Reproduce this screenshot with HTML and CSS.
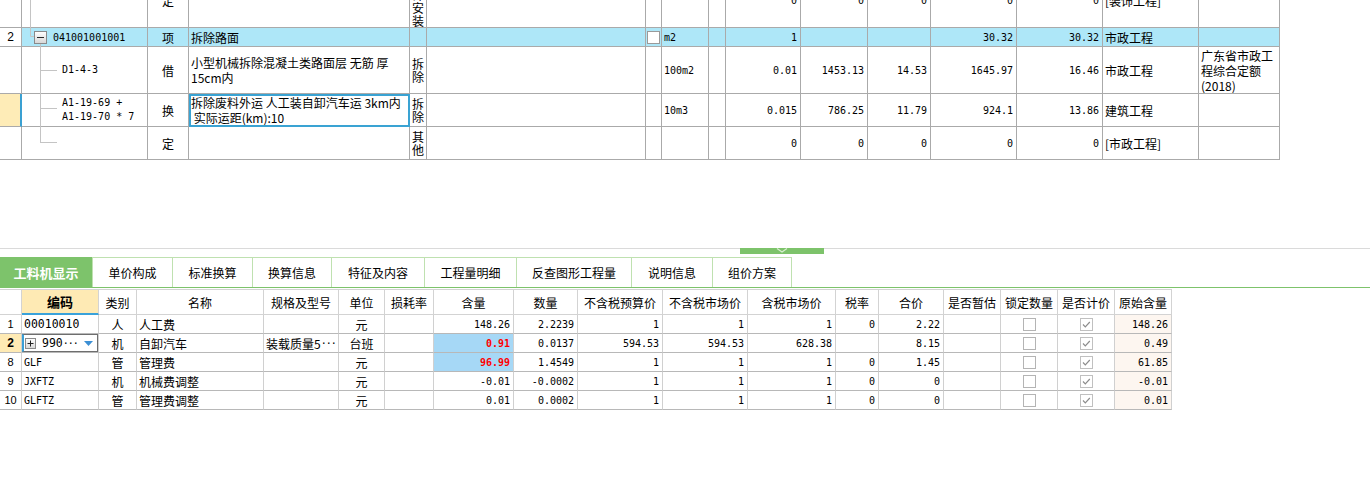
FILE: index.html
```html
<!DOCTYPE html>
<html lang="zh-CN">
<head>
<meta charset="utf-8">
<title>工料机显示</title>
<link rel="stylesheet" href="styles.css">
</head>
<body>
<div class="upper">
  <div class="tgrid">
    <div class="c"></div>
    <div class="c"></div>
    <div class="c ctr">定</div>
    <div class="c"></div>
    <div class="c vert">装饰安装</div>
    <div class="c"></div>
    <div class="c"></div>
    <div class="c"></div>
    <div class="c"></div>
    <div class="c n">0</div>
    <div class="c n">0</div>
    <div class="c n">0</div>
    <div class="c n">0</div>
    <div class="c n">0</div>
    <div class="c txt">[装饰工程]</div>
    <div class="c"></div>

    <div class="c rn">2</div>
    <div class="c hl tree"><svg class="minus" width="13" height="13" viewBox="0 0 13 13"><defs><linearGradient id="gm" x1="0" y1="0" x2="0" y2="1"><stop offset="0" stop-color="#ffffff"/><stop offset="1" stop-color="#d6d6d6"/></linearGradient></defs><rect x="0.5" y="0.5" width="12" height="12" fill="url(#gm)" stroke="#8a8a8a"/><rect x="3" y="6" width="7" height="1" fill="#2a2a2a"/></svg><span class="mono">041001001001</span></div>
    <div class="c hl ctr">项</div>
    <div class="c hl txt">拆除路面</div>
    <div class="c hl"></div>
    <div class="c hl"></div>
    <div class="c hl ctr"><svg width="13" height="13" viewBox="0 0 13 13"><rect x="0.5" y="0.5" width="12" height="12" fill="#fff" stroke="#9a9a9a"/></svg></div>
    <div class="c hl unit">m2</div>
    <div class="c hl"></div>
    <div class="c hl n">1</div>
    <div class="c hl"></div>
    <div class="c hl"></div>
    <div class="c hl n">30.32</div>
    <div class="c hl n">30.32</div>
    <div class="c hl txt">市政工程</div>
    <div class="c hl"></div>

    <div class="c"></div>
    <div class="c code">D1-4-3</div>
    <div class="c ctr">借</div>
    <div class="c txt"><span class="ml">小型机械拆除混凝土类路面层 无筋 厚<br>15cm内</span></div>
    <div class="c vert">拆除</div>
    <div class="c"></div>
    <div class="c"></div>
    <div class="c unit">100m2</div>
    <div class="c"></div>
    <div class="c n">0.01</div>
    <div class="c n">1453.13</div>
    <div class="c n">14.53</div>
    <div class="c n">1645.97</div>
    <div class="c n">16.46</div>
    <div class="c txt">市政工程</div>
    <div class="c txt"><span class="ml">广东省市政工<br>程综合定额<br>(2018)</span></div>

    <div class="c rn cur"></div>
    <div class="c code"><span>A1-19-69 +<br>A1-19-70 * 7</span></div>
    <div class="c ctr">换</div>
    <div class="c txt sel"><span class="ml">拆除废料外运 人工装自卸汽车运 3km内<br>&nbsp;实际运距(km):10</span></div>
    <div class="c vert">拆除</div>
    <div class="c"></div>
    <div class="c"></div>
    <div class="c unit">10m3</div>
    <div class="c"></div>
    <div class="c n">0.015</div>
    <div class="c n">786.25</div>
    <div class="c n">11.79</div>
    <div class="c n">924.1</div>
    <div class="c n">13.86</div>
    <div class="c txt">建筑工程</div>
    <div class="c"></div>

    <div class="c"></div>
    <div class="c"></div>
    <div class="c ctr">定</div>
    <div class="c"></div>
    <div class="c vert">其他</div>
    <div class="c"></div>
    <div class="c"></div>
    <div class="c"></div>
    <div class="c"></div>
    <div class="c n">0</div>
    <div class="c n">0</div>
    <div class="c n">0</div>
    <div class="c n">0</div>
    <div class="c n">0</div>
    <div class="c txt">[市政工程]</div>
    <div class="c"></div>
  </div>
  <svg class="tree-lines" width="70" height="160" viewBox="0 0 70 160">
    <path d="M30.5 0V36.5H34M40.5 44V142.5M40 70.5H57M40 108.5H57M40 142.5H57" fill="none" stroke="#c4c4c4" stroke-width="1"/>
  </svg>
</div>

<div class="gap"></div>
<div class="splitter"><div class="handle"><svg width="12" height="5" viewBox="0 0 12 5"><path d="M1 0.5L6 4L11 0.5" fill="none" stroke="#d8efcf" stroke-width="1.2"/></svg></div></div>

<div class="tabs">
  <div class="tab on w92">工料机显示</div>
  <div class="tab first w81">单价构成</div>
  <div class="tab w80">标准换算</div>
  <div class="tab w79">换算信息</div>
  <div class="tab w93">特征及内容</div>
  <div class="tab w92">工程量明细</div>
  <div class="tab w115">反查图形工程量</div>
  <div class="tab w81">说明信息</div>
  <div class="tab w79">组价方案</div>
</div>

<div class="bgrid">
  <div class="h"></div>
  <div class="h key">编码</div>
  <div class="h">类别</div>
  <div class="h">名称</div>
  <div class="h">规格及型号</div>
  <div class="h">单位</div>
  <div class="h">损耗率</div>
  <div class="h">含量</div>
  <div class="h">数量</div>
  <div class="h">不含税预算价</div>
  <div class="h">不含税市场价</div>
  <div class="h">含税市场价</div>
  <div class="h">税率</div>
  <div class="h">合价</div>
  <div class="h">是否暂估</div>
  <div class="h">锁定数量</div>
  <div class="h">是否计价</div>
  <div class="h">原始含量</div>

  <div class="d rno">1</div>
  <div class="d lft code7">00010010</div>
  <div class="d ctr">人</div>
  <div class="d lft">人工费</div>
  <div class="d lft"></div>
  <div class="d ctr">元</div>
  <div class="d"></div>
  <div class="d n">148.26</div>
  <div class="d n">2.2239</div>
  <div class="d n">1</div>
  <div class="d n">1</div>
  <div class="d n">1</div>
  <div class="d n">0</div>
  <div class="d n">2.22</div>
  <div class="d"></div>
  <div class="d ctr"><svg width="13" height="13" viewBox="0 0 13 13"><rect x="0.5" y="0.5" width="12" height="12" fill="#fff" stroke="#b4b4b4"/></svg></div>
  <div class="d ctr"><svg width="13" height="13" viewBox="0 0 13 13"><rect x="0.5" y="0.5" width="12" height="12" fill="#fff" stroke="#c0c0c0"/><path d="M3 6.5L5.3 8.8L9.8 4" fill="none" stroke="#8c8c8c" stroke-width="1.2"/></svg></div>
  <div class="d n orig">148.26</div>

  <div class="d rno cur">2</div>
  <div class="d edit-cell"><div class="edit"><svg width="11" height="11" viewBox="0 0 11 11"><defs><linearGradient id="gp" x1="0" y1="0" x2="0" y2="1"><stop offset="0" stop-color="#ffffff"/><stop offset="1" stop-color="#d6d6d6"/></linearGradient></defs><rect x="0.5" y="0.5" width="10" height="10" fill="url(#gp)" stroke="#8a8a8a"/><rect x="2.5" y="5" width="6" height="1" fill="#222"/><rect x="5" y="2.5" width="1" height="6" fill="#222"/></svg><span class="code7 ev">990<span class="dots">···</span></span><svg class="dd" width="9" height="5" viewBox="0 0 9 5"><path d="M0 0H9L4.5 5Z" fill="#3c8fd4"/></svg></div></div>
  <div class="d ctr">机</div>
  <div class="d lft">自卸汽车</div>
  <div class="d lft">装载质量5<span class="dots">···</span></div>
  <div class="d ctr">台班</div>
  <div class="d"></div>
  <div class="d n blue red">0.91</div>
  <div class="d n">0.0137</div>
  <div class="d n">594.53</div>
  <div class="d n">594.53</div>
  <div class="d n">628.38</div>
  <div class="d n"></div>
  <div class="d n">8.15</div>
  <div class="d"></div>
  <div class="d ctr"><svg width="13" height="13" viewBox="0 0 13 13"><rect x="0.5" y="0.5" width="12" height="12" fill="#fff" stroke="#b4b4b4"/></svg></div>
  <div class="d ctr"><svg width="13" height="13" viewBox="0 0 13 13"><rect x="0.5" y="0.5" width="12" height="12" fill="#fff" stroke="#c0c0c0"/><path d="M3 6.5L5.3 8.8L9.8 4" fill="none" stroke="#8c8c8c" stroke-width="1.2"/></svg></div>
  <div class="d n orig">0.49</div>

  <div class="d rno">8</div>
  <div class="d lft mono">GLF</div>
  <div class="d ctr">管</div>
  <div class="d lft">管理费</div>
  <div class="d lft"></div>
  <div class="d ctr">元</div>
  <div class="d"></div>
  <div class="d n blue red">96.99</div>
  <div class="d n">1.4549</div>
  <div class="d n">1</div>
  <div class="d n">1</div>
  <div class="d n">1</div>
  <div class="d n">0</div>
  <div class="d n">1.45</div>
  <div class="d"></div>
  <div class="d ctr"><svg width="13" height="13" viewBox="0 0 13 13"><rect x="0.5" y="0.5" width="12" height="12" fill="#fff" stroke="#b4b4b4"/></svg></div>
  <div class="d ctr"><svg width="13" height="13" viewBox="0 0 13 13"><rect x="0.5" y="0.5" width="12" height="12" fill="#fff" stroke="#c0c0c0"/><path d="M3 6.5L5.3 8.8L9.8 4" fill="none" stroke="#8c8c8c" stroke-width="1.2"/></svg></div>
  <div class="d n orig">61.85</div>

  <div class="d rno">9</div>
  <div class="d lft mono">JXFTZ</div>
  <div class="d ctr">机</div>
  <div class="d lft">机械费调整</div>
  <div class="d lft"></div>
  <div class="d ctr">元</div>
  <div class="d"></div>
  <div class="d n">-0.01</div>
  <div class="d n">-0.0002</div>
  <div class="d n">1</div>
  <div class="d n">1</div>
  <div class="d n">1</div>
  <div class="d n">0</div>
  <div class="d n">0</div>
  <div class="d"></div>
  <div class="d ctr"><svg width="13" height="13" viewBox="0 0 13 13"><rect x="0.5" y="0.5" width="12" height="12" fill="#fff" stroke="#b4b4b4"/></svg></div>
  <div class="d ctr"><svg width="13" height="13" viewBox="0 0 13 13"><rect x="0.5" y="0.5" width="12" height="12" fill="#fff" stroke="#c0c0c0"/><path d="M3 6.5L5.3 8.8L9.8 4" fill="none" stroke="#8c8c8c" stroke-width="1.2"/></svg></div>
  <div class="d n orig">-0.01</div>

  <div class="d rno">10</div>
  <div class="d lft mono">GLFTZ</div>
  <div class="d ctr">管</div>
  <div class="d lft">管理费调整</div>
  <div class="d lft"></div>
  <div class="d ctr">元</div>
  <div class="d"></div>
  <div class="d n">0.01</div>
  <div class="d n">0.0002</div>
  <div class="d n">1</div>
  <div class="d n">1</div>
  <div class="d n">1</div>
  <div class="d n">0</div>
  <div class="d n">0</div>
  <div class="d"></div>
  <div class="d ctr"><svg width="13" height="13" viewBox="0 0 13 13"><rect x="0.5" y="0.5" width="12" height="12" fill="#fff" stroke="#b4b4b4"/></svg></div>
  <div class="d ctr"><svg width="13" height="13" viewBox="0 0 13 13"><rect x="0.5" y="0.5" width="12" height="12" fill="#fff" stroke="#c0c0c0"/><path d="M3 6.5L5.3 8.8L9.8 4" fill="none" stroke="#8c8c8c" stroke-width="1.2"/></svg></div>
  <div class="d n orig">0.01</div>
</div>
</body>
</html>
```

FILE: styles.css
```css
* { box-sizing: border-box; }
html, body { margin: 0; padding: 0; background: #fff; }
body {
  width: 1370px;
  height: 484px;
  overflow: hidden;
  font-family: "Noto Sans CJK SC", "Noto Sans", sans-serif;
  font-size: 12px;
  color: #000;
}
svg { display: block; flex: none; }

/* ---------- upper grid ---------- */
.upper { position: relative; height: 160px; overflow: hidden; }
.tgrid {
  display: grid;
  width: 1280px;
  grid-template-columns: 22px 126px 41px 221px 17px 219px 16px 47px 17px 75px 67px 63px 86px 86px 96px 81px;
  grid-template-rows: 54px 19px 47px 33px 33px;
  margin-top: -26px;
}
.tgrid .c {
  display: flex;
  align-items: center;
  border-right: 1px solid #aaaaaa;
  border-bottom: 1px solid #aaaaaa;
  line-height: 13px;
  white-space: nowrap;
  overflow: hidden;
}
.tgrid .ctr { justify-content: center; }
.tgrid .txt { padding-left: 2px; }
.tgrid .ml { line-height: 15px; }
.tgrid .n {
  justify-content: flex-end;
  padding-right: 3px;
  font-family: "DejaVu Sans Mono", "Liberation Mono", monospace;
  font-size: 10px;
}
.tgrid .unit {
  padding-left: 2px;
  font-family: "DejaVu Sans Mono", "Liberation Mono", monospace;
  font-size: 10px;
}
.tgrid .code {
  padding-left: 40px;
  font-family: "DejaVu Sans Mono", "Liberation Mono", monospace;
  font-size: 10px;
  line-height: 14px;
}
.tgrid .vert {
  white-space: normal;
  justify-content: center;
  text-align: center;
  padding: 0 2px;
  word-break: break-all;
}
.tgrid .rn {
  justify-content: center;
  font-family: "Liberation Sans", Arial, sans-serif;
  font-size: 12px;
}
.tgrid .rn.cur { background: #feecb7; border-right: 2px solid #3aa0d2; }
.tgrid .hl { background: #aee7f8; }
.tgrid .tree { padding-left: 12px; }
.tgrid .tree .minus { margin-right: 6px; }
.mono {
  font-family: "DejaVu Sans Mono", "Liberation Mono", monospace;
  font-size: 10px;
}
.tgrid .sel { outline: 2px solid #3aa3d3; outline-offset: -2px; }
.tree-lines { position: absolute; left: 0; top: 0; }

/* ---------- splitter ---------- */
.gap { height: 88px; }
.splitter {
  height: 9px;
  background: linear-gradient(#dadada, #dadada) top left / 100% 1px no-repeat;
}
.handle {
  margin-left: 740px;
  width: 84px;
  height: 6px;
  background: #7dc36b;
  display: flex;
  justify-content: center;
}

/* ---------- tabs ---------- */
.tabs {
  display: flex;
  height: 31px;
  border-bottom: 1px solid #7dc36b;
}
.tab {
  display: flex;
  align-items: center;
  justify-content: center;
  border-top: 1px solid #bfe1b0;
  border-right: 1px solid #bfe1b0;
  white-space: nowrap;
}
.tab.first { border-left: 1px solid #bfe1b0; }
.tab.on {
  background: #7dc36b;
  color: #fff;
  font-weight: bold;
  font-size: 13px;
  border: none;
}
.w79 { width: 79px; }
.w80 { width: 80px; }
.w81 { width: 81px; }
.w92 { width: 92px; }
.w93 { width: 93px; }
.w115 { width: 115px; }

/* ---------- lower grid ---------- */
.bgrid {
  display: grid;
  width: 1172px;
  padding-top: 1px;
  grid-template-columns: 22px 77px 38px 127px 75px 46px 49px 80px 64px 85px 85px 88px 43px 65px 57px 57px 57px 57px;
  grid-template-rows: 26px repeat(5, 19px);
}
.bgrid .h {
  display: flex;
  align-items: center;
  justify-content: center;
  border-top: 1px solid #d3d3d3;
  border-right: 1px solid #d3d3d3;
  border-bottom: 1px solid #d3d3d3;
  white-space: nowrap;
}
.bgrid .h.key {
  background: #feeab4;
  font-weight: bold;
  font-size: 13px;
  border-bottom: 2px solid #3aa2da;
}
.bgrid .d {
  display: flex;
  align-items: center;
  border-right: 1px solid #d0d0d0;
  border-bottom: 1px solid #b8b8b8;
  white-space: nowrap;
  overflow: hidden;
}
.bgrid .ctr { justify-content: center; }
.bgrid .lft { padding-left: 2px; }
.bgrid .n {
  justify-content: flex-end;
  padding-right: 3px;
  font-family: "DejaVu Sans Mono", "Liberation Mono", monospace;
  font-size: 10px;
}
.bgrid .rno {
  justify-content: center;
  font-family: "Liberation Sans", Arial, sans-serif;
  font-size: 11px;
}
.bgrid .rno.cur { background: #feeab4; font-weight: bold; font-size: 12px; }
.bgrid .code7 {
  font-family: "DejaVu Sans Mono", "Liberation Mono", monospace;
  font-size: 11.5px;
}
.dots {
  font-family: "DejaVu Sans Mono", "Liberation Mono", monospace;
  font-size: 10px;
  letter-spacing: -1px;
}
.bgrid .blue { background: #a6d8f6; }
.bgrid .red { color: #ff0000; font-weight: bold; }
.bgrid .orig { background: #fdf6f0; }
.bgrid .edit-cell { padding: 0; }
.edit {
  display: flex;
  align-items: center;
  width: 100%;
  height: 100%;
  border: 1px solid #6e6e6e;
  border-left: 2px solid #3a9fd6;
  padding-left: 1px;
}
.edit .ev { margin-left: 6px; }
.edit .dd { margin-left: auto; margin-right: 4px; }
```
